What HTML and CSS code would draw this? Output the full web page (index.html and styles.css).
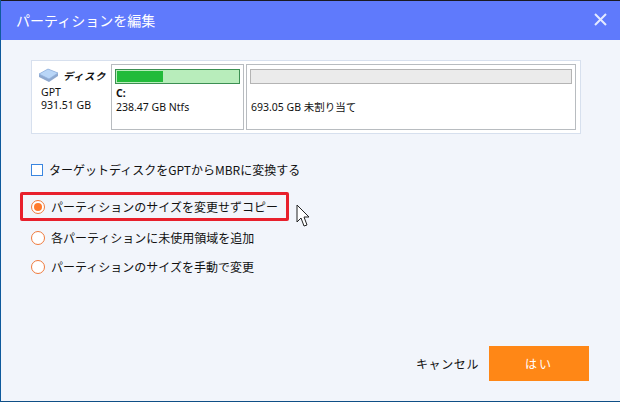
FILE: index.html
```html
<!DOCTYPE html>
<html lang="ja">
  <head>
    <meta charset="UTF-8" />
    <title>パーティションを編集</title>
    <link rel="stylesheet" href="styles.css">
  </head>

  <body>
    <section class="dialog">
      <header class="titlebar">
        <h1>パーティションを編集</h1>
        <svg class="close" width="13" height="13" viewBox="0 0 13 13">
          <path d="M1 1L12 12M12 1L1 12" stroke="#e4eaff" stroke-width="2" fill="none" />
        </svg>
      </header>

      <main class="content">
        <div class="disk">
          <div class="disk-info">
            <div class="disk-name">
              <svg width="21" height="15" viewBox="0 0 21 15">
                <path d="M1 6L10 1L20 5L20 8L11 14L1 9Z" fill="#8fa9cf" />
                <path d="M1 6L10 1L20 5L11 11Z" fill="#b9d6f7" stroke="#8fb0dc" stroke-width="0.7" />
              </svg>
              <b>ディスク</b>
            </div>
            <p>GPT</p>
            <p>931.51 GB</p>
          </div>

          <div class="part part-c">
            <div class="bar bar-c"><div class="bar-used"></div></div>
            <p class="part-label">C:</p>
            <p>238.47 GB Ntfs</p>
          </div>

          <div class="part part-free">
            <div class="bar bar-free"></div>
            <p class="part-label">&nbsp;</p>
            <p>693.05 GB 未割り当て</p>
          </div>
        </div>

        <label class="check">
          <span class="checkbox"></span>
          ターゲットディスクをGPTからMBRに変換する
        </label>

        <div class="options">
          <div class="option selected">
            <span class="radio on"></span>
            パーティションのサイズを変更せずコピー
          </div>
          <div class="option">
            <span class="radio"></span>
            各パーティションに未使用領域を追加
          </div>
          <div class="option">
            <span class="radio"></span>
            パーティションのサイズを手動で変更
          </div>
        </div>

        <svg class="cursor" width="14" height="24" viewBox="0 0 14 24">
          <path d="M1 1L1 18L5 14L8 22L11 21L8 13L13 13Z" fill="#fff" stroke="#222" stroke-width="1" />
        </svg>

        <footer class="buttons">
          <button class="cancel">キャンセル</button>
          <button class="ok">はい</button>
        </footer>
      </main>
    </section>
  </body>
</html>
```

FILE: styles.css
```css
* {
  box-sizing: border-box;
}

html,
body {
  margin: 0;
  height: 100%;
}

body {
  font-family: "Noto Sans", "Noto Sans CJK JP", sans-serif;
  font-size: 12px;
  color: #111;
}

p {
  margin: 0;
}

.dialog {
  position: relative;
  display: flex;
  flex-direction: column;
  width: 620px;
  height: 402px;
  border-left: 1px solid #0f5a9c;
  border-bottom: 1px solid #0f4f86;
  background-color: #f2f5fb;
}

.titlebar {
  display: flex;
  align-items: center;
  justify-content: space-between;
  height: 40px;
  padding: 0 13px 2px 15px;
  border-top: 1px solid #1a1a22;
  background-color: #5f7afc;
  color: white;
}

.titlebar h1 {
  margin: 0;
  font-family: "Noto Sans CJK JP", sans-serif;
  font-size: 14px;
  font-weight: normal;
}

.content {
  flex: 1;
  display: flex;
  flex-direction: column;
  padding: 20px 31px 20px 19px;
}

.disk {
  display: flex;
  width: 550px;
  height: 74px;
  margin-left: 11px;
  padding: 3px 4px;
  border: 1px solid #d7e0ee;
  background-color: white;
  font-size: 10.5px;
}

.disk-info {
  flex: none;
  width: 75px;
  padding: 2px 0 0 2px;
  line-height: 13px;
}

.disk-info p {
  margin-left: 3px;
}

.disk-name {
  display: flex;
  align-items: center;
  gap: 4px;
  height: 18px;
  margin-bottom: 2px;
  white-space: nowrap;
}

.disk-name b {
  font-family: "Noto Sans CJK JP", sans-serif;
  font-size: 10px;
  font-style: italic;
  letter-spacing: 1px;
}

.part {
  flex: none;
  height: 66px;
  padding: 4px 3px;
  border: 1px solid #b8bcc0;
  line-height: 13px;
}

.part p {
  margin-left: 1px;
}

.part-c {
  width: 133px;
  margin-right: 2px;
}

.part-free {
  width: 330px;
}

.bar {
  height: 15px;
  margin-bottom: 3px;
}

.bar-c {
  border: 1px solid #3c8f52;
  background-color: #b8edbb;
  padding: 1px;
}

.bar-used {
  width: 38%;
  height: 100%;
  background-color: #22bb3a;
}

.bar-free {
  border: 1px solid #b4b4b4;
  background-color: #ebebeb;
}

.part-label {
  font-weight: bold;
  margin-bottom: 1px;
}

.check {
  display: flex;
  align-items: center;
  gap: 6px;
  margin: 27px 0 0 11px;
  font-family: "Noto Sans CJK JP", sans-serif;
}

.checkbox {
  width: 12px;
  height: 12px;
  border: 1px solid #3a86e0;
  background-color: white;
}

.options {
  margin-top: 14px;
  font-family: "Noto Sans CJK JP", sans-serif;
}

.option {
  display: flex;
  align-items: center;
  gap: 6px;
  width: 269px;
  height: 29px;
  padding-left: 11px;
}

.option.selected {
  border: 3px solid #e8202c;
  border-radius: 2px;
  padding-left: 8px;
  margin-bottom: 2px;
}

.radio {
  display: flex;
  align-items: center;
  justify-content: center;
  width: 14px;
  height: 14px;
  border: 1px solid #f07a3c;
  border-radius: 50%;
  background-color: white;
}

.radio.on::after {
  content: "";
  width: 8px;
  height: 8px;
  border-radius: 50%;
  background-color: #ff7a2c;
}

.cursor {
  position: absolute;
  left: 295px;
  top: 204px;
}

.buttons {
  display: flex;
  justify-content: flex-end;
  align-items: center;
  gap: 10px;
  margin-top: auto;
}

.buttons button {
  border: 0;
  padding: 0;
  font-family: "Noto Sans CJK JP", sans-serif;
  font-size: 12px;
}

.cancel {
  background: none;
  color: #111;
  letter-spacing: 0.6px;
}

.ok {
  width: 100px;
  height: 35px;
  background-color: #ff8716;
  color: white;
  letter-spacing: 2px;
}
```
